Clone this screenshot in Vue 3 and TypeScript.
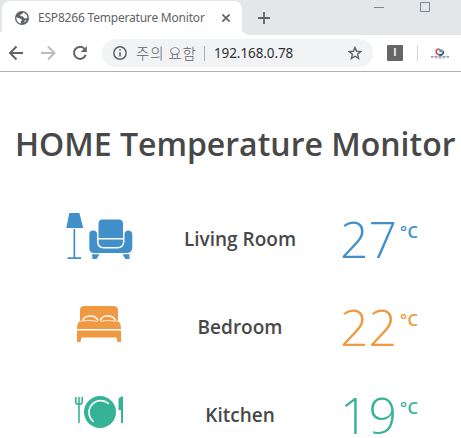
<script setup lang="ts">
interface Room {
  id: 'living' | 'bedroom' | 'kitchen'
  name: string
  temperature: number
}

const rooms: Room[] = [
  { id: 'living', name: 'Living Room', temperature: 27 },
  { id: 'bedroom', name: 'Bedroom', temperature: 22 },
  { id: 'kitchen', name: 'Kitchen', temperature: 19 },
]
</script>

<template>
  <div class="window">
    <header class="tab-strip">
      <div class="tab">
        <svg class="globe" width="14" height="14" viewBox="0 0 14 14">
          <circle cx="7" cy="7" r="7" fill="#5f6368" />
          <path d="M1.3 6.2 5.2 7.4 7.2 9.1 5.8 10.5 6.1 12.6C3.2 12.2 1.3 9.9 1.3 7ZM8.2 1.5 7.2 3 5.4 3.6 5.2 5 8 5.6 9.2 7.2 11.2 7.5 12.5 6.5C12.3 4 10.5 2 8.2 1.5ZM9.8 9.2 11.6 9.2 9.3 11.8Z" fill="#fff" />
        </svg>
        <span class="tab-title">ESP8266 Temperature Monitor</span>
        <svg class="close" width="8" height="8" viewBox="0 0 8 8"><path d="M.4.4 7.6 7.6M7.6.4.4 7.6" stroke="#5f6368" stroke-width="1.7" /></svg>
      </div>
      <div class="strip-rest">
        <svg class="plus" width="12" height="12" viewBox="0 0 12 12"><path d="M6 0V12M0 6H12" stroke="#5f6368" stroke-width="1.8" /></svg>
        <svg class="controls" width="57" height="12" viewBox="0 0 57 12"><path d="M0 5.5H10M46.500 .5H55.500V9.500H46.500Z" fill="none" stroke="#80868b" /></svg>
      </div>
    </header>

    <div class="toolbar">
      <svg class="nav-icons" width="82" height="18" viewBox="0 0 82 18" fill="none" stroke-width="2">
        <path d="M15 9H2.500M8.500 2.500 2 9 8.500 15.500" stroke="#5f6368" />
        <path d="M33 9H45.500M40 2.500 46.500 9 40 15.500" stroke="#babcbe" />
        <path d="M76.200 4.600A6 6 0 1 0 77.700 10.700" stroke="#5f6368" />
        <path d="M78.800 2V8H72.800Z" fill="#5f6368" />
      </svg>
      <div class="omnibox">
        <svg class="info" width="14" height="14" viewBox="0 0 14 14"><circle cx="7" cy="7" r="6.200" fill="none" stroke="#5f6368" stroke-width="1.500" /><path d="M7 3.200V4.800M7 6.200V10.600" stroke="#5f6368" stroke-width="1.600" /></svg>
        <span class="warning">주의 요함</span>
        <span class="divider"></span>
        <span class="url">192.168.0.78</span>
        <svg class="star" width="14" height="14" viewBox="0 0 14 14"><path d="M7 1.500 8.600 5.300 12.700 5.600 9.600 8.300 10.600 12.400 7 10.200 3.400 12.400 4.400 8.300 1.300 5.600 5.400 5.300Z" fill="none" stroke="#5f6368" stroke-width="1.400" /></svg>
      </div>
      <span class="extension">I</span>
      <span class="extension-divider"></span>
      <svg class="badge" width="20" height="12" viewBox="0 0 20 12">
        <path d="M9.500 1C5.500.8 5 5.300 8.500 6.500" fill="none" stroke="#e04a45" stroke-width="1.700" />
        <path d="M8.500 6.500C11.500 8 14 5.500 13.300 3" fill="none" stroke="#3b4f8d" stroke-width="1.800" />
        <path d="M9 1 13 1.800 12.500 4 9.500 4.500Z" fill="#5b8fca" />
        <path d="M1 8.800H19" stroke="#77787f" stroke-width="1.300" stroke-dasharray="2 .5 1 .5" />
        <path d="M5 10.800H15" stroke="#d2d2d5" stroke-width=".8" />
      </svg>
    </div>

    <main>
      <h1>HOME Temperature Monitor</h1>
      <section v-for="room in rooms" :key="room.id" class="room" :class="room.id">
        <div class="icon">
          <svg v-if="room.id === 'living'" width="68" height="48" viewBox="0 0 68 48">
            <path d="M4.300 1H14.400L18.200 16H1.300Z" fill="currentColor" />
            <path d="M8.500 17H10.200V45.200H16V47H2.500V45.200H8.500Z" fill="currentColor" />
            <path d="M37 7.500H54Q58 7.500 58 12V26H33.500V12Q33.500 7.500 37 7.500Z" fill="currentColor" />
            <path d="M33.500 27.500H58V30Q57.500 35 52.500 35H38.500Q34 35 33.500 30Z" fill="currentColor" />
            <path d="M24.300 22Q24.300 18.500 28.100 18.500 32 18.500 32 22V30Q32.500 36.500 38.500 36.500H52.500Q58.500 36.500 59.500 30V22Q59.800 18.500 63.300 18.500 67.300 18.500 67.300 23V36Q66.800 41 61.300 41H29.300Q24.300 41 24.300 36Z" fill="currentColor" />
            <path d="M27 42.300H34.500L31.500 47H27.500ZM57.500 42.300H64.500V47H60.500Z" fill="currentColor" />
          </svg>
          <svg v-else-if="room.id === 'bedroom'" width="46" height="38" viewBox="0 0 46 38">
            <path d="M8 1H37Q42 1 42 5V16H4V5Q4 1 8 1Z" fill="currentColor" />
            <path d="M4 16H42Q45 18 45 24H1Q1 18 4 16Z" fill="currentColor" />
            <path d="M7 15.500Q8 11.500 12 11.200Q19.500 10 22 15.500M24 15.500Q26.500 10 33 11Q38 11.500 39.500 15.500" fill="none" stroke="#fff" stroke-width="1.400" />
            <path d="M4 16.300Q13 14.500 21.500 16.300M24.500 16.300Q33 14.500 42 16.300" fill="none" stroke="#fff" stroke-width=".8" />
            <path d="M1 25.500H45V37H41.500L40.500 32.500H5.500L4.500 37H1Z" fill="currentColor" />
          </svg>
          <svg v-else width="50" height="34" viewBox="0 0 50 34">
            <path d="M1.800 2V7Q2 9.500 5 9.500 8 9.500 8.200 7V2M5 2V28" fill="none" stroke="currentColor" stroke-width="1.600" />
            <circle cx="26" cy="17" r="16" fill="currentColor" />
            <path d="M34.500 8.500A11.700 11.700 0 0 0 19 26.200" fill="none" stroke="#fff" stroke-width="1.600" stroke-linecap="round" />
            <path d="M44.500 15V5Q44.500 1.500 49 1.500V28H47V15Z" fill="currentColor" />
          </svg>
        </div>
        <h2>{{ room.name }}</h2>
        <div class="temperature">
          <span class="value">{{ room.temperature }}</span><sup>°C</sup>
        </div>
      </section>
    </main>
  </div>
</template>

<style>
body { background: #fff; overflow: hidden; }
</style>

<style scoped>
* { box-sizing: border-box; }
svg { display: block; flex: none; }
.window { width: 461px; height: 438px; overflow: hidden; font-family: "Open Sans", "Noto Sans CJK KR", sans-serif; color: #484848; }
.tab-strip { display: flex; height: 35px; padding-top: 1px; padding-left: 2px; background: linear-gradient(#e3e7ea 0 32px, #fff 32px); }
.tab { display: flex; align-items: center; width: 240px; height: 34px; padding-left: 13px; border-radius: 8px 8px 0 0; background: #fff; color: #5f6368; }
.tab-title { width: 184px; margin-left: 9px; font: 12px/16px "Noto Sans", sans-serif; white-space: nowrap; letter-spacing: -.2px; }
.strip-rest { display: flex; flex: 1; height: 35px; margin-top: -1px; background: #e3e7ea; border-bottom-left-radius: 8px; padding-left: 16px; }
.plus { margin-top: 12px; }
.controls { margin-left: 104px; margin-top: 2px; }
.toolbar { display: flex; align-items: center; height: 37px; border-bottom: 1px solid #b0b0b0; background: #fff; padding-left: 8px; }
.omnibox { display: flex; align-items: center; width: 271px; height: 28px; margin-left: 12px; padding-left: 11px; border-radius: 14px; background: #f1f3f4; }
.warning { width: 61px; margin-left: 9px; color: #5f6368; font: 300 14.500px/20px "Noto Sans CJK KR", sans-serif; white-space: nowrap; letter-spacing: .8px; }
.divider { width: 1px; height: 15px; margin-left: 7px; background: #aaadb0; }
.url { width: 124px; margin-left: 9px; color: #303134; font: 13.500px/20px "Noto Sans", sans-serif; letter-spacing: -.1px; }
.star { margin-left: 10px; }
.extension { width: 16px; height: 16px; margin-left: 14px; border-radius: 1px; background: #666; color: #fff; font: bold 10px/16px "Liberation Sans", sans-serif; text-align: center; }
.extension-divider { width: 1px; height: 16px; margin-left: 14px; background: #d4d6d8; }
.badge { margin-left: 12px; margin-top: 1px; }
main { padding-top: 45px; }
h1 { height: 56px; margin: 0 0 22px 15px; font-size: 32px; line-height: 53px; font-weight: 600; white-space: nowrap; }
.room { display: grid; grid-template-columns: 198px 84px 179px; height: 88px; align-items: center; }
.icon { display: flex; justify-content: center; padding-bottom: 6px; }
.living { color: #4290ca; }
.bedroom { color: #f09943; }
.kitchen { color: #35b397; }
h2 { margin: 0; justify-self: center; font-size: 19px; line-height: 28px; font-weight: 600; color: #484848; white-space: nowrap; }
.temperature { display: flex; padding-left: 58px; height: 44px; }
.value { width: 57px; font-size: 50px; line-height: 44px; font-weight: 300; }
sup { margin-left: 3px; margin-top: 5px; font-size: 16.500px; line-height: 20px; font-weight: 600; letter-spacing: .5px; vertical-align: baseline; }
</style>
